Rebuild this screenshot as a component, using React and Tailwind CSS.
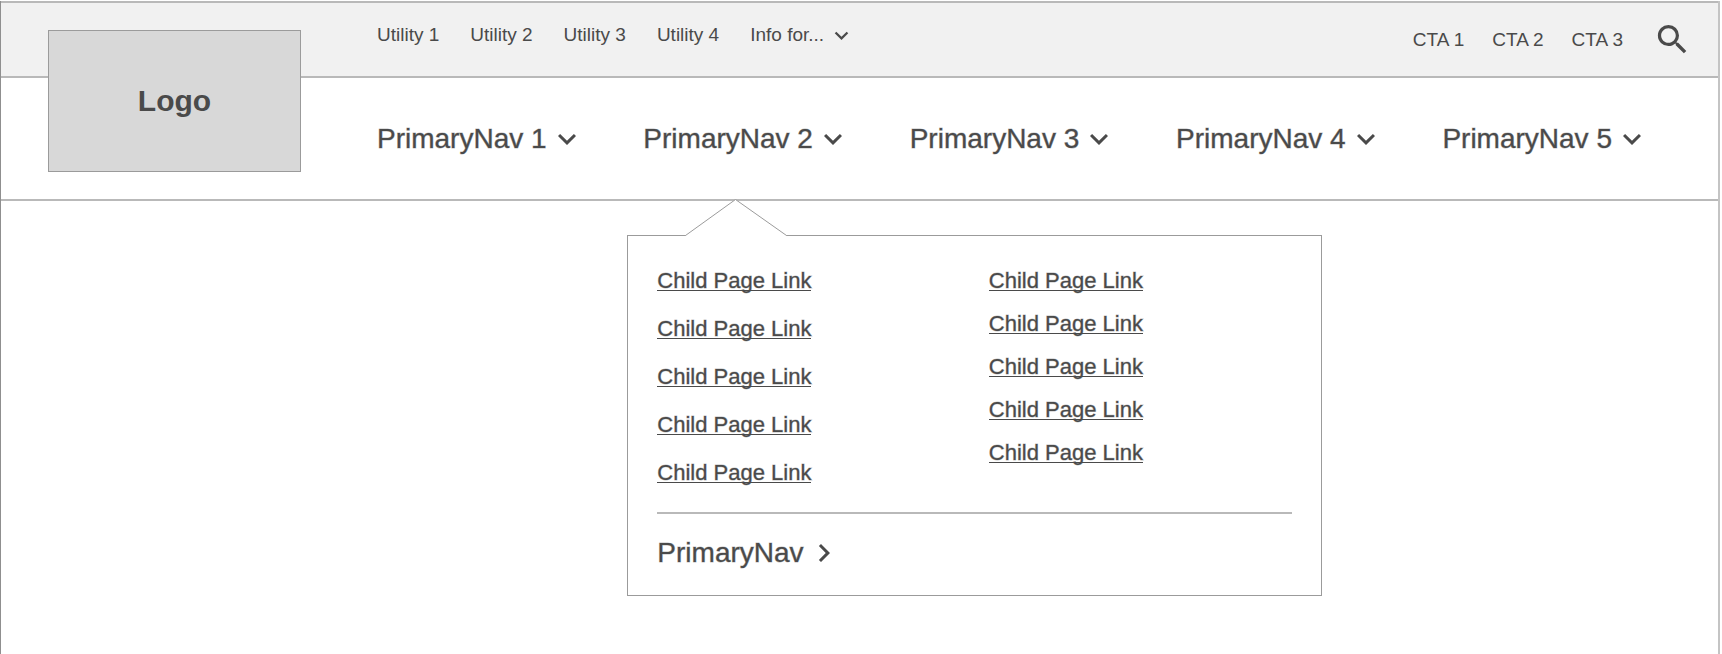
import { MdChevronRight, MdExpandMore, MdSearch } from "react-icons/md";

const utilities = ["Utility 1", "Utility 2", "Utility 3", "Utility 4"];
const ctas = ["CTA 1", "CTA 2", "CTA 3"];
const primary = [1, 2, 3, 4, 5];
const children = [1, 2, 3, 4, 5];

function ChildLinks({ gap }) {
  return (
    <ul className={`flex flex-col items-start ${gap}`}>
      {children.map((n) => (
        <li key={n} className="flex text-[22px] leading-[18px] [-webkit-text-stroke:1px_#4a4a4a60]">
          <a href="#child" className="border-b border-[#4a4a4a]">
            Child Page Link
          </a>
        </li>
      ))}
    </ul>
  );
}

function Dropdown() {
  return (
    <div className="absolute top-full -left-4 mt-9 w-[695px] border border-[#9b9b9b] bg-white px-[29px] pt-9 pb-6">
      <svg
        className="absolute -top-[37px] left-[57px] h-[37px] w-[102px]"
        viewBox="0 0 102 37"
        fill="none"
        aria-hidden="true"
      >
        <path d="M0.5 36.5 50.5 0.5 101.5 36.5V37H0.5Z" fill="#fff" />
        <path d="M0 36.5H0.5L50.5 0.5 101.5 36.5H102" stroke="#9b9b9b" />
      </svg>
      <div className="grid grid-cols-2 gap-x-7">
        <ChildLinks gap="gap-[29px]" />
        <ChildLinks gap="gap-6" />
      </div>
      <hr className="mt-[29px] border-t-2 border-[#b9b9b9]" />
      <a
        href="#primary"
        className="mt-[21px] flex w-fit items-center gap-0.5 text-[28px] leading-9 [-webkit-text-stroke:1px_#4a4a4a60]"
      >
        PrimaryNav
        <MdChevronRight size={36} aria-hidden="true" />
      </a>
    </div>
  );
}

export default function App() {
  return (
    <div className="min-h-screen bg-white pt-px pr-0.5 font-['Liberation_Sans',Arial,sans-serif] text-[#4a4a4a]">
      <div className="min-h-[calc(100vh-1px)] border-r-2 border-l border-r-[#c4c4c4] border-l-[#8f8f8f]">
        <header className="relative">
          <div className="flex items-start justify-between border-y-2 border-[#b9b9b9] bg-[#f1f1f1] pr-[26px] pl-[376px]">
            <nav aria-label="Utility" className="pt-[18px]">
              <ul className="flex gap-[31px] text-[19px] leading-7">
                {utilities.map((label) => (
                  <li key={label}>
                    <a href="#utility">{label}</a>
                  </li>
                ))}
                <li>
                  <button type="button" className="flex items-center gap-1">
                    Info for...
                    <MdExpandMore size={27} aria-hidden="true" />
                  </button>
                </li>
              </ul>
            </nav>
            <div className="flex items-center gap-[30px] py-[17px] text-[19px] leading-7">
              <div className="flex gap-7">
                {ctas.map((label) => (
                  <a key={label} href="#cta">
                    {label}
                  </a>
                ))}
              </div>
              <button type="button" aria-label="Search">
                <MdSearch size={39} aria-hidden="true" />
              </button>
            </div>
          </div>

          <nav
            aria-label="Primary"
            className="border-b-2 border-[#b9b9b9] pr-[68px] pl-[376px]"
          >
            <ul className="flex justify-between">
              {primary.map((n) => (
                <li key={n} className="relative flex h-[121px] items-center">
                  <button
                    type="button"
                    aria-expanded={n === 2}
                    className="flex items-center gap-0.5 text-[28px] leading-9 whitespace-nowrap [-webkit-text-stroke:1px_#4a4a4a60]"
                  >
                    PrimaryNav {n}
                    <MdExpandMore size={36} aria-hidden="true" />
                  </button>
                  {n === 2 && <Dropdown />}
                </li>
              ))}
            </ul>
          </nav>

          <a
            href="#home"
            className="absolute top-[29px] left-[47px] flex h-[142px] w-[253px] items-center justify-center border border-[#9b9b9b] bg-[#d8d8d8] pb-0.5 text-[30px] font-bold"
          >
            Logo
          </a>
        </header>
      </div>
    </div>
  );
}
